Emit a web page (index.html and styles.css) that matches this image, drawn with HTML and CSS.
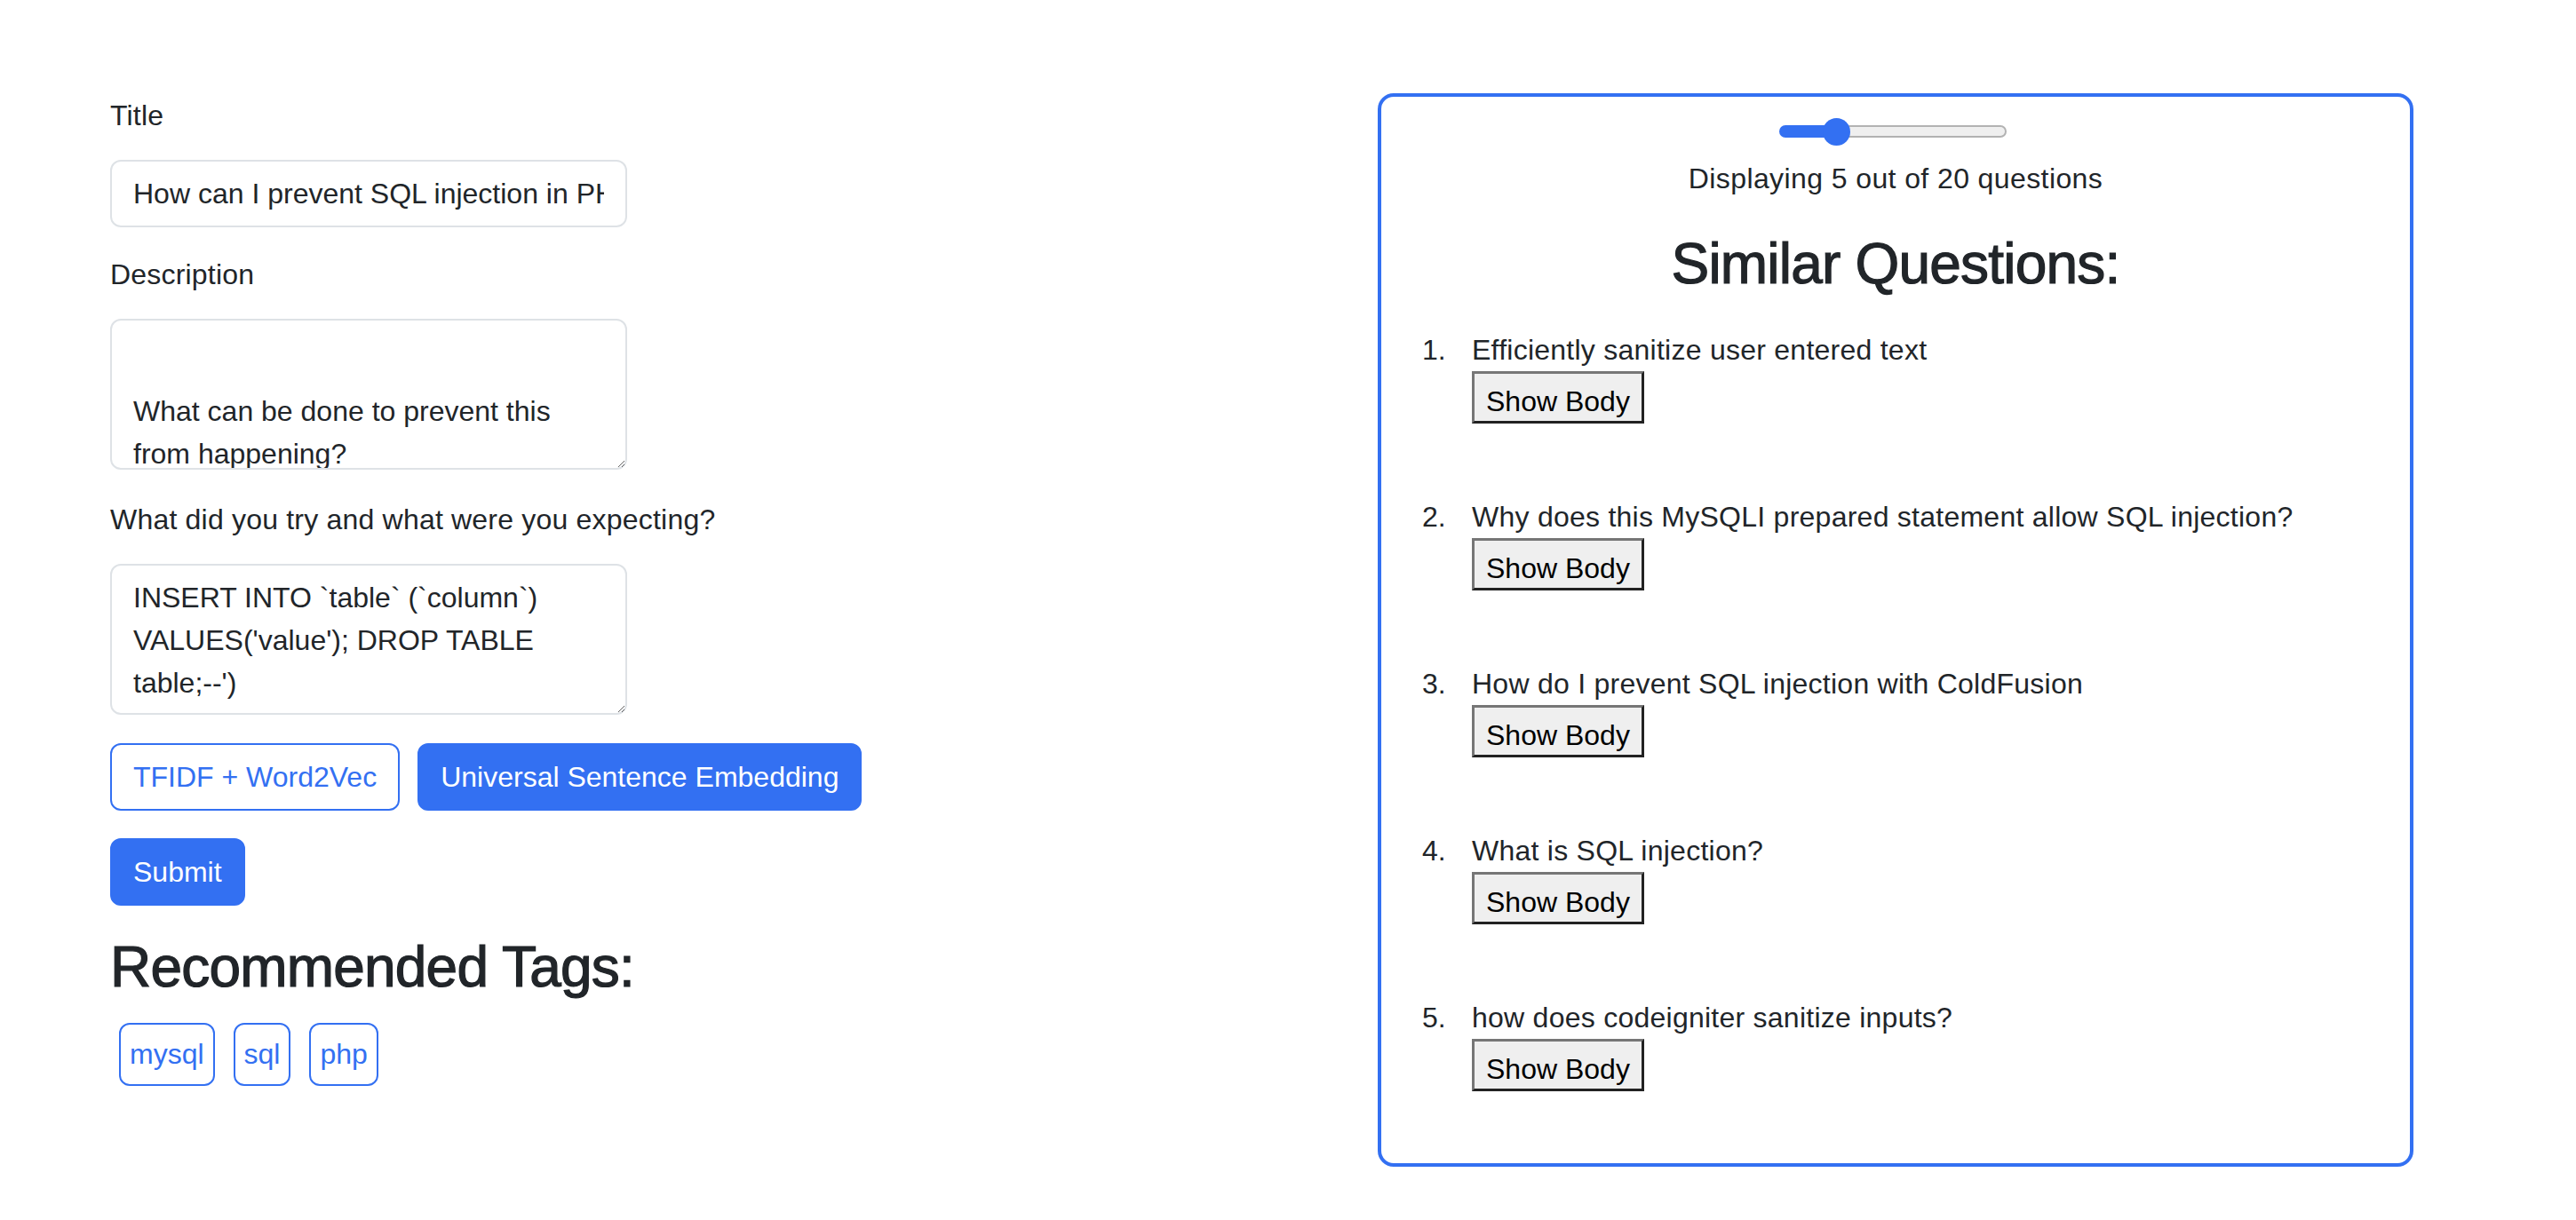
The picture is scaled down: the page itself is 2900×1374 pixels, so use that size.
FILE: index.html
```html
<!DOCTYPE html>
<html lang="en">
<head>
<meta charset="utf-8">
<title>Tag Recommender</title>
<link rel="stylesheet" href="styles.css">
</head>
<body>
<main class="page">
  <section class="form-col">
    <div class="field">
      <label class="field-label" for="title">Title</label>
      <input id="title" class="text-input" type="text" value="How can I prevent SQL injection in PHP?">
    </div>
    <div class="field field-area">
      <label class="field-label" for="desc">Description</label>
      <textarea id="desc" class="text-area text-area-scrolled">What can be done to prevent this from happening?</textarea>
    </div>
    <div class="field field-area">
      <label class="field-label" for="tried">What did you try and what were you expecting?</label>
      <textarea id="tried" class="text-area">INSERT INTO `table` (`column`) VALUES('value'); DROP TABLE table;--')</textarea>
    </div>
    <div class="model-buttons">
      <button class="btn btn-outline" type="button">TFIDF + Word2Vec</button>
      <button class="btn btn-primary" type="button">Universal Sentence Embedding</button>
    </div>
    <div class="submit-row">
      <button class="btn btn-primary" type="submit">Submit</button>
    </div>
    <h2 class="heading">Recommended Tags:</h2>
    <div class="tags">
      <span class="tag">mysql</span>
      <span class="tag">sql</span>
      <span class="tag">php</span>
    </div>
  </section>

  <section class="card">
    <div class="slider-row">
      <input class="range" type="range" min="1" max="20" value="5" aria-label="Number of questions">
    </div>
    <p class="count">Displaying 5 out of 20 questions</p>
    <h2 class="heading heading-center">Similar Questions:</h2>
    <ol class="questions">
      <li class="question">
        <span class="q-title">Efficiently sanitize user entered text</span>
        <button class="show-body" type="button">Show Body</button>
      </li>
      <li class="question">
        <span class="q-title">Why does this MySQLI prepared statement allow SQL injection?</span>
        <button class="show-body" type="button">Show Body</button>
      </li>
      <li class="question">
        <span class="q-title">How do I prevent SQL injection with ColdFusion</span>
        <button class="show-body" type="button">Show Body</button>
      </li>
      <li class="question">
        <span class="q-title">What is SQL injection?</span>
        <button class="show-body" type="button">Show Body</button>
      </li>
      <li class="question">
        <span class="q-title">how does codeigniter sanitize inputs?</span>
        <button class="show-body" type="button">Show Body</button>
      </li>
    </ol>
  </section>
</main>
</body>
</html>
```

FILE: styles.css
```css
* {
  box-sizing: border-box;
}

html, body {
  margin: 0;
  background: #ffffff;
}

body {
  font-family: "Liberation Sans", Arial, sans-serif;
  font-size: 32px;
  line-height: 48px;
  color: #212529;
}

.page {
  display: flex;
  align-items: flex-start;
  padding: 105px 0 0 124px;
}

/* ---------- left form column ---------- */
.form-col {
  flex: 0 0 1427px;
  padding-top: 1px;
}

.field {
  margin-bottom: 29px;
}

.field-area {
  margin-bottom: 32px;
}

.field-label {
  display: block;
  margin-bottom: 26px;
  letter-spacing: 0.2px;
}

.text-input,
.text-area {
  display: block;
  width: 582px;
  font-family: inherit;
  font-size: 32px;
  line-height: 48px;
  color: #212529;
  background: #ffffff;
  border: 2px solid #dee2e6;
  border-radius: 12px;
  padding: 12px 24px;
  margin: 0;
  outline: none;
}

.text-input {
  height: 76px;
}

.text-area {
  height: 170px;
  resize: vertical;
  overflow: hidden;
}

.text-area-scrolled {
  padding-top: 78px;
}

.model-buttons {
  display: flex;
  gap: 20px;
  margin-bottom: 31px;
}

.btn {
  font-family: inherit;
  font-size: 32px;
  line-height: 48px;
  padding: 12px 24px;
  border: 2px solid #3370f2;
  border-radius: 12px;
  margin: 0;
  cursor: pointer;
}

.btn-outline {
  color: #3370f2;
  background: #ffffff;
}

.btn-primary {
  color: #ffffff;
  background: #3370f2;
}

.submit-row {
  margin-bottom: 31px;
}

.heading {
  margin: 0 0 24px;
  font-size: 64px;
  line-height: 76.8px;
  font-weight: 400;
  letter-spacing: -0.8px;
  -webkit-text-stroke: 1.2px #212529;
}

.tags {
  display: flex;
  gap: 21px;
  padding-left: 10px;
}

.tag {
  display: inline-block;
  color: #3370f2;
  border: 2px solid #3370f2;
  border-radius: 12px;
  padding: 9px 10px 10px;
  line-height: 48px;
}

/* ---------- right card ---------- */
.card {
  flex: 0 0 1166px;
  border: 4px solid #3370f2;
  border-radius: 18px;
  padding: 0;
}

.slider-row {
  display: flex;
  justify-content: center;
  padding: 23px 6px 0 0;
  height: 55px;
}

.range {
  -webkit-appearance: none;
  appearance: none;
  width: 256px;
  height: 32px;
  margin: 0;
  background: transparent;
}

.range::-webkit-slider-runnable-track {
  height: 14px;
  border: 2px solid transparent;
  border-radius: 7px;
  background:
    linear-gradient(to right, #3370f2 0 64px, transparent 64px) border-box,
    linear-gradient(#efefef, #efefef) padding-box,
    linear-gradient(#b2b2b2, #b2b2b2) border-box;
}

.range::-webkit-slider-thumb {
  -webkit-appearance: none;
  appearance: none;
  width: 31px;
  height: 31px;
  border-radius: 50%;
  border: none;
  background: #3370f2;
  margin-top: -10.5px;
}

.count {
  margin: 13px 0 34px;
  text-align: center;
  letter-spacing: 0.4px;
}

.heading-center {
  text-align: center;
  margin-bottom: 34px;
}

.questions {
  list-style: none;
  margin: 0;
  padding: 0 0 0 46px;
  counter-reset: q;
}

.question {
  display: grid;
  grid-template-columns: 56px auto;
  justify-content: start;
  margin-bottom: 81px;
  counter-increment: q;
}

.question::before {
  content: counter(q) ".";
  grid-column: 1;
  grid-row: 1;
}

.q-title {
  grid-column: 2;
  grid-row: 1;
  letter-spacing: 0.25px;
}

.show-body {
  grid-column: 2;
  grid-row: 2;
  justify-self: start;
  font-family: inherit;
  font-size: 32px;
  line-height: 36px;
  color: #000000;
  background: #efefef;
  padding: 13px 13px 4px;
  margin: 0;
  border-style: solid;
  border-width: 3px;
  border-color: #767676 #222222 #222222 #767676;
  border-radius: 0;
  cursor: pointer;
}
```
